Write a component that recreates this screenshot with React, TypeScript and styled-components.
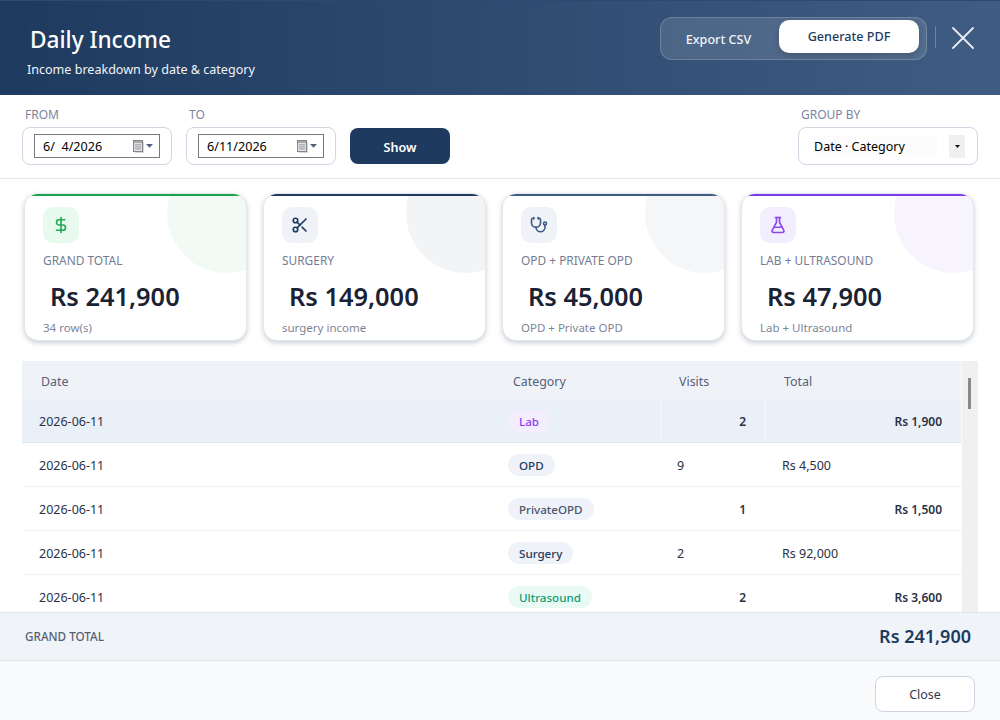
import React from "react";
import styled, { createGlobalStyle } from "styled-components";
import { DollarSign, Scissors, Stethoscope, FlaskConical, X } from "lucide-react";

const Global = createGlobalStyle`
  html, body { margin: 0; padding: 0; background: #fff; }
  * { box-sizing: border-box; }
  body { font-family: "Noto Sans", "Open Sans", "Liberation Sans", sans-serif; }
`;

const Page = styled.div`
  width: 1000px; height: 720px; overflow: hidden; display: flex; flex-direction: column; background: #fff;
`;
const Header = styled.header`
  height: 95px; flex: none; display: flex; justify-content: space-between; align-items: flex-start;
  background: linear-gradient(90deg, #1e3a5f 0%, #3f5c82 100%);
  border-top: 1px solid #2c4a70;
  padding: 16px 17px 0 27px; color: #fff;
`;
const TitleBlock = styled.div`display: flex; flex-direction: column;`;
const Title = styled.h1`
  margin: 7px 0 0 3px; font-size: 22.6px; line-height: 32px; font-weight: 500; color: #fff;
`;
const Subtitle = styled.div`
  margin-top: 5px; font-size: 12.55px; line-height: 18px; color: #f0f3f8;
`;
const HeaderActions = styled.div`display: flex; align-items: flex-start;`;
const ActionGroup = styled.div`
  width: 267px; height: 43px; display: flex; align-items: flex-start; padding: 2px 7px 0 0;
  background: rgba(255,255,255,.12); border: 1px solid rgba(255,255,255,.18); border-radius: 12px;
`;
const GhostAction = styled.button`
  width: 118px; height: 37px; padding: 2px 3px 0 0; border: 0; background: none; color: #f2f5f9;
  font: 500 12.6px "Noto Sans", sans-serif;
`;
const PrimaryAction = styled.button`
  width: 140px; height: 33px; border: 0; padding: 1px 0 1px; background: #fff; color: #1e3a5f; border-radius: 10px;
  font: 500 12.6px "Noto Sans", sans-serif; box-shadow: 0 2px 6px rgba(0,0,0,.2);
`;
const Divider = styled.div`width: 1px; height: 22px; margin: 9px 0 0 8px; background: rgba(255,255,255,.25);`;
const CloseIcon = styled.button`
  width: 40px; height: 40px; margin: 1px 0 0 7px; padding: 0; border: 0; background: none; color: #e8ecf2;
  display: flex; align-items: center; justify-content: center;
`;

const Filters = styled.section`
  height: 84px; flex: none; padding: 12px 22px 0; display: flex; align-items: flex-start; border-bottom: 1px solid #e6e8f0;
`;
const Field = styled.div<{ $w: number; $ml?: number }>`
  width: ${p => p.$w}px; margin-left: ${p => p.$ml ?? 0}px; display: flex; flex-direction: column;
`;
const FieldLabel = styled.label`
  font-size: 12px; line-height: 15px; color: #7c84a0; margin: 0 0 5px 3px; height: 15px;
`;
const FieldBox = styled.div`
  height: 38px; border: 1px solid #d0d5e2; border-radius: 8px; background: #fff; display: flex; align-items: center;
`;
const DateBox = styled.div`
  width: 126px; height: 24px; margin-left: 11px; border: 1px solid #7a7a7a; background: #fff; display: flex; align-items: center; padding: 0 5px 0 8px;
  font-size: 12.6px; color: #000; justify-content: space-between; white-space: pre;
`;
const SelectText = styled.div`
  flex: 1; height: 20px; margin-left: 15px; line-height: 21px; font-size: 12.5px; color: #000; background: #fcfcfc;
`;
const SelectButton = styled.div`
  width: 16px; height: 23px; margin: 0 12px 0 12px; background: #f0f0f0; display: flex; align-items: center; justify-content: center;
`;
const ShowButton = styled.button`
  width: 100px; height: 36px; margin: 21px 0 0 14px; border: 0; border-radius: 8px; background: #1e3a5f; color: #fff;
  font: 600 12.6px "Noto Sans", sans-serif; padding: 2px 0 0;
`;
const Spacer = styled.div`flex: 1;`;

const Cards = styled.section`
  flex: none; height: 182px; padding: 14px 0 0 24px; display: flex; gap: 16px; align-items: flex-start;
`;
const Card = styled.article<{ $accent: string; $w: number }>`
  position: relative; overflow: hidden; flex: none; width: ${p => p.$w}px; height: 148px; background: #fff; border-radius: 14px;
  border: 1px solid #e4e8ee;
  box-shadow: 0 2px 5px rgba(40,60,90,.25);
  padding: 13px 18px 0;
  &::before {
    content: ""; position: absolute; width: 120px; height: 120px; border-radius: 50%; top: -41px; right: -41px;
    background: ${p => p.$accent}; opacity: .055;
  }
  &::after {
    content: ""; position: absolute; top: -1px; left: -1px; right: -1px; height: 3px; background: ${p => p.$accent};
  }
`;
const IconBox = styled.div<{ $bg: string; $fg: string }>`
  width: 36px; height: 36px; border-radius: 10px; background: ${p => p.$bg}; color: ${p => p.$fg};
  display: flex; align-items: center; justify-content: center;
`;
const CardLabel = styled.div`
  margin-top: 9px; font-size: 11.9px; line-height: 16px; color: #747c94; text-transform: uppercase; white-space: nowrap;
`;
const CardValue = styled.div`
  margin: 11px 0 0 7px; font-size: 25.4px; line-height: 34px; font-weight: 600; color: #1a2233; white-space: nowrap;
`;
const CardSub = styled.div`
  margin-top: 7px; font-size: 11.5px; line-height: 16px; color: #7e8498;
`;

const TableWrap = styled.section`
  position: relative; flex: none; height: 251px; margin: 0 22px; overflow: hidden; padding-right: 16px;
  &::after { content: ""; position: absolute; top: 0; bottom: 0; right: 0; width: 16px; background: #f0f0f0; border-left: 1px solid #fafafa; }
  &::before { content: ""; position: absolute; z-index: 1; top: 17px; right: 7px; width: 3px; height: 31px; background: #8a8a8a; }
`;
const columns = "478px 160px 105px 196px";
const HeadRow = styled.div`
  display: grid; grid-template-columns: ${columns}; height: 38px; background: #eff3f8; align-items: center; padding-top: 2px;
`;
const HeadCell = styled.div`font-size: 12.4px; color: #55607a; padding-left: 19px; &:nth-child(2) { padding-left: 13px; }`;
const Row = styled.div<{ $on?: boolean }>`
  display: grid; grid-template-columns: ${columns}; height: 44px; align-items: stretch;
  background: ${p => (p.$on ? "#eaf0f8" : "#fff")};
  border-bottom: 1px solid ${p => (p.$on ? "#e0e6ee" : "#f0f2f5")};
`;
const Cell = styled.div<{ $right?: boolean; $sep?: boolean; $strong?: boolean }>`
  display: flex; align-items: center; font-size: ${p => (p.$strong ? "12px" : "12.5px")}; color: #2a3245;
  justify-content: ${p => (p.$right ? "flex-end" : "flex-start")};
  padding: ${p => (p.$right ? "2px 19px 0 0" : "2px 0 0 17px")};
  font-weight: ${p => (p.$strong ? 600 : 400)};
  border-left: ${p => (p.$sep ? "1px solid #f6f8fb" : "0")};
`;
const PillCell = styled.div`display: flex; align-items: center; padding: 1px 0 0 8px;`;
const Pill = styled.span<{ $bg: string; $fg: string }>`
  display: inline-flex; align-items: center; height: 22px; padding: 0 11px; border-radius: 11px;
  font-size: 11.6px; font-weight: 500; background: ${p => p.$bg}; color: ${p => p.$fg};
`;

const TotalBar = styled.section`
  flex: none; height: 49px; display: flex; align-items: center; justify-content: space-between; padding: 0 29px 2px 25px;
  background: #f0f3f8; border-top: 1px solid #e0e4ec; border-bottom: 1px solid #e0e4ec;
`;
const TotalLabel = styled.div`font-size: 11.7px; font-weight: 500; color: #555f75;`;
const TotalValue = styled.div`font-size: 18px; font-weight: 600; color: #1e3a5f;`;
const Footer = styled.footer`
  flex: 1; background: #f9fafc; display: flex; justify-content: flex-end; align-items: flex-start; padding: 15px 25px 0 0;
`;
const CloseButton = styled.button`
  width: 100px; height: 36px; border: 1px solid #cfd4e0; border-radius: 8px; background: #fff; color: #333b50;
  font: 400 12.5px "Noto Sans", sans-serif; padding: 1px 0 0;
`;

const CalendarGlyph = () => (
  <svg width="21" height="13" viewBox="0 0 21 13">
    <rect x="0.5" y="0.5" width="9" height="11" fill="#dfe1e4" stroke="#858585" />
    <rect x="1" y="1" width="8" height="2" fill="#a9a9a9" />
    <path d="M2 4.5h6M2 6.5h6M2 8.5h6M3 4v6M5 4v6M7 4v6" stroke="#a2a6ad" strokeWidth=".7" />
    <path d="M10.5 2v10.5H2" stroke="#d6d6d6" fill="none" />
    <path d="M13 4h7l-3.5 3.8z" fill="#4f6080" />
  </svg>
);

const cards = [
  { w: 223, accent: "#16a34a", bg: "#e8f9ee", fg: "#22a755", Icon: DollarSign, label: "Grand Total", value: "Rs 241,900", sub: "34 row(s)" },
  { w: 223, accent: "#1e3a5f", bg: "#eff3f8", fg: "#1e3a5f", Icon: Scissors, label: "Surgery", value: "Rs 149,000", sub: "surgery income" },
  { w: 223, accent: "#3f5c82", bg: "#eff3f8", fg: "#3f5c82", Icon: Stethoscope, label: "OPD + Private OPD", value: "Rs 45,000", sub: "OPD + Private OPD" },
  { w: 233, accent: "#7c3aed", bg: "#f3eefe", fg: "#8b47f0", Icon: FlaskConical, label: "Lab + Ultrasound", value: "Rs 47,900", sub: "Lab + Ultrasound" },
];

const rows = [
  { cat: "Lab", bg: "#f4edfe", fg: "#8b3ff0", visits: "2", total: "Rs 1,900", right: true, on: true },
  { cat: "OPD", bg: "#eff2f8", fg: "#1e3a5f", visits: "9", total: "Rs 4,500", right: false },
  { cat: "PrivateOPD", bg: "#eff2f8", fg: "#4a5570", visits: "1", total: "Rs 1,500", right: true },
  { cat: "Surgery", bg: "#eff2f8", fg: "#1e3a5f", visits: "2", total: "Rs 92,000", right: false },
  { cat: "Ultrasound", bg: "#e8faf3", fg: "#0f9d78", visits: "2", total: "Rs 3,600", right: true },
];

export default function App() {
  return (
    <Page>
      <Global />
      <Header>
        <TitleBlock>
          <Title>Daily Income</Title>
          <Subtitle>Income breakdown by date &amp; category</Subtitle>
        </TitleBlock>
        <HeaderActions>
          <ActionGroup>
            <GhostAction>Export CSV</GhostAction>
            <PrimaryAction>Generate PDF</PrimaryAction>
          </ActionGroup>
          <Divider />
          <CloseIcon aria-label="Close"><X size={40} strokeWidth={1.1} /></CloseIcon>
        </HeaderActions>
      </Header>

      <Filters>
        <Field $w={150}>
          <FieldLabel>FROM</FieldLabel>
          <FieldBox><DateBox>{"6/  4/2026"}<CalendarGlyph /></DateBox></FieldBox>
        </Field>
        <Field $w={150} $ml={14}>
          <FieldLabel>TO</FieldLabel>
          <FieldBox><DateBox>6/11/2026<CalendarGlyph /></DateBox></FieldBox>
        </Field>
        <ShowButton>Show</ShowButton>
        <Spacer />
        <Field $w={180}>
          <FieldLabel>GROUP BY</FieldLabel>
          <FieldBox>
            <SelectText>Date · Category</SelectText>
            <SelectButton>
              <svg width="5" height="3" viewBox="0 0 5 3"><path d="M0 0h5L2.5 3z" fill="#111" /></svg>
            </SelectButton>
          </FieldBox>
        </Field>
      </Filters>

      <Cards>
        {cards.map(({ Icon, ...c }) => (
          <Card key={c.label} $accent={c.accent} $w={c.w}>
            <IconBox $bg={c.bg} $fg={c.fg}><Icon size={18} strokeWidth={2.2} /></IconBox>
            <CardLabel>{c.label}</CardLabel>
            <CardValue>{c.value}</CardValue>
            <CardSub>{c.sub}</CardSub>
          </Card>
        ))}
      </Cards>

      <TableWrap>
        <HeadRow>
          <HeadCell>Date</HeadCell>
          <HeadCell>Category</HeadCell>
          <HeadCell>Visits</HeadCell>
          <HeadCell>Total</HeadCell>
        </HeadRow>
        {rows.map(r => (
          <Row key={r.cat} $on={r.on}>
            <Cell>2026-06-11</Cell>
            <PillCell><Pill $bg={r.bg} $fg={r.fg}>{r.cat}</Pill></PillCell>
            <Cell $right={r.right} $strong={r.right} $sep={r.on}>{r.visits}</Cell>
            <Cell $right={r.right} $strong={r.right} $sep={r.on}>{r.total}</Cell>
          </Row>
        ))}
      </TableWrap>

      <TotalBar>
        <TotalLabel>GRAND TOTAL</TotalLabel>
        <TotalValue>Rs 241,900</TotalValue>
      </TotalBar>
      <Footer><CloseButton>Close</CloseButton></Footer>
    </Page>
  );
}
